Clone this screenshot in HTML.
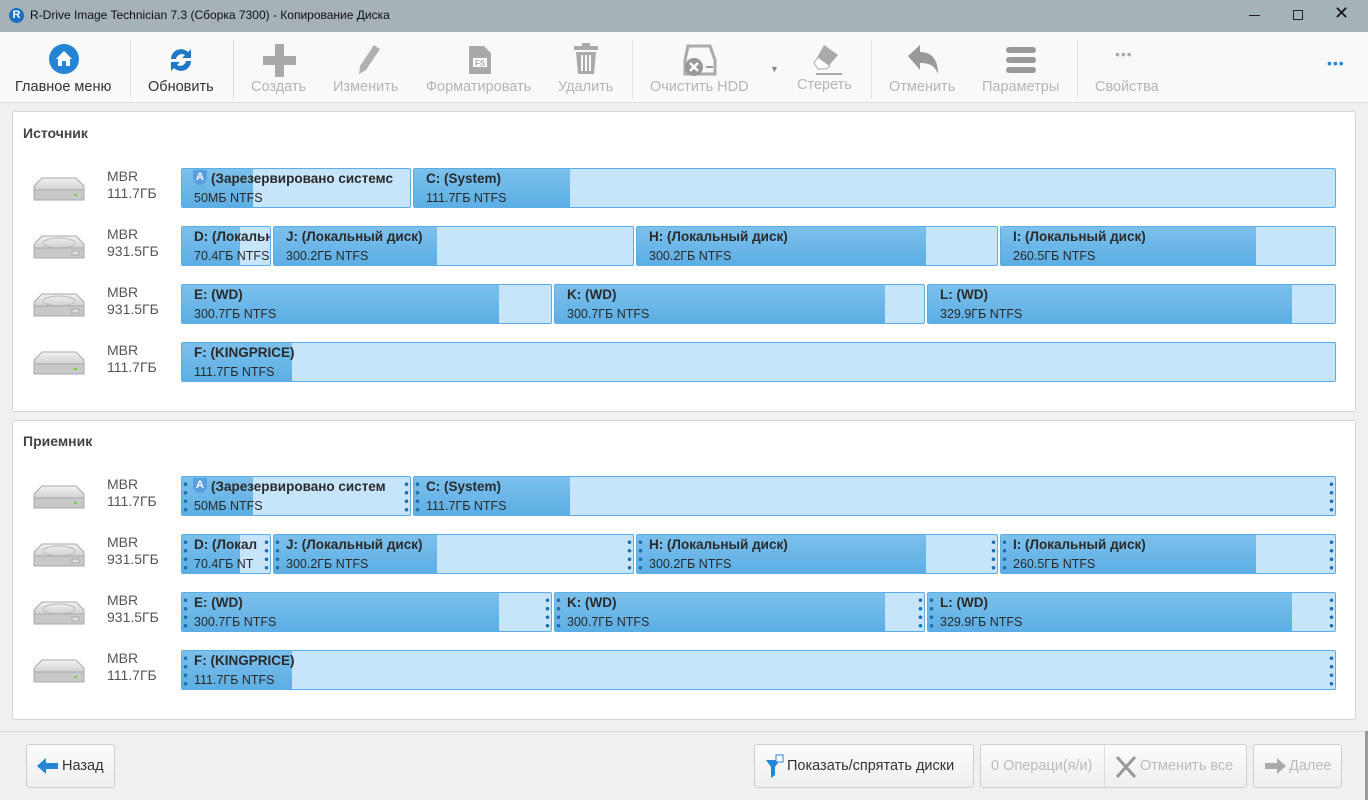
<!DOCTYPE html>
<html><head><meta charset="utf-8"><style>
*{margin:0;padding:0;box-sizing:border-box}
body{width:1368px;height:800px;overflow:hidden;background:#f0f0f0;font-family:"Liberation Sans",sans-serif;position:relative;color:#333}
.a{position:absolute}
#title{left:0;top:0;width:1368px;height:32px;background:#a5b2b8;font-size:12px;color:#111}
#tb{left:0;top:32px;width:1368px;height:71px;background:#f9f9f9;border-bottom:1px solid #ddd}
.tl{position:absolute;top:47px;font-size:14.5px;color:#b5b5b5;white-space:nowrap}
.tl.d{color:#333}
.sep{position:absolute;top:8px;width:1px;height:58px;background:#e0e0e0}
.panel{position:absolute;left:12px;width:1344px;background:#fff;border:1px solid #d4d4d4;border-radius:3px}
.ph{position:absolute;left:10px;font-size:14px;font-weight:bold;color:#444}
.mbr{position:absolute;left:107px;font-size:14px;color:#555;line-height:17px}
.hdd{position:absolute;left:32px;width:54px;height:30px}
.p{position:absolute;height:40px;background:#c7e5fa;border:1px solid #5aaee5;border-radius:2px;overflow:hidden;white-space:nowrap}
.u{position:absolute;left:0;top:0;bottom:0;background:linear-gradient(#7cc0ec,#5caee4)}
.p b{position:absolute;left:12px;top:2px;font-size:13.5px;color:#2a2a2a}
.p i{position:absolute;left:12px;top:22px;font-size:12.5px;font-style:normal;color:#2a2a2a}
.dt .p:before,.dt .p:after{content:"";position:absolute;top:3px;width:5px;height:34px;background:radial-gradient(circle,#1f6fae 1.6px,transparent 2px) 0 0/5px 8.5px repeat-y;z-index:2}
.dt .p:before{left:1px}.dt .p:after{right:1px}
.btn{position:absolute;top:744px;height:44px;border:1px solid #cfcfcf;border-radius:3px;background:linear-gradient(#fbfbfb,#efefef);font-size:14.5px;color:#333;line-height:42px}
</style></head><body>
<div id="title" class="a">
<div class="a" style="left:9px;top:8px;width:15px;height:15px;border-radius:50%;background:#1a6fc0;color:#fff;font-size:11px;font-weight:bold;text-align:center;line-height:15px">R</div>
<div class="a" style="left:30px;top:8px">R-Drive Image Technician 7.3 (Сборка 7300) - Копирование Диска</div>
<div class="a" style="left:1249px;top:15px;width:11px;height:1px;background:#222"></div>
<div class="a" style="left:1293px;top:10px;width:10px;height:10px;border:1px solid #222"></div>
<div class="a" style="left:1334px;top:3px;font-size:18px">✕</div>
</div>
<div id="tb" class="a">
<svg class="a" style="left:48px;top:11px" width="32" height="32"><circle cx="16" cy="16" r="15" fill="#2584d4"/><path d="M8 16 L16 8 L24 16 L22 16 L22 23 L18 23 L18 18 L14 18 L14 23 L10 23 L10 16Z" fill="#fff"/></svg>
<div class="tl d" style="left:15px">Главное меню</div>
<div class="sep" style="left:130px"></div>
<svg class="a" style="left:166px;top:12px" width="30" height="32"><path d="M5 15 A10 10 0 0 1 22 8 L25 5 L25 14 L16 14 L19 11 A6 6 0 0 0 10 15Z" fill="#1f77c6"/><path d="M25 17 A10 10 0 0 1 8 24 L5 27 L5 18 L14 18 L11 21 A6 6 0 0 0 20 17Z" fill="#1f77c6"/></svg>
<div class="tl d" style="left:148px">Обновить</div>
<div class="sep" style="left:233px"></div>
<svg class="a" style="left:263px;top:12px" width="33" height="33"><path d="M12 0h9v12h12v9H21v12h-9V21H0v-9h12z" fill="#a9a9a9"/></svg>
<div class="tl" style="left:251px">Создать</div>
<svg class="a" style="left:352px;top:10px" width="32" height="36"><path d="M22 3l6 4-14 21-7 4 1-8z" fill="#b0b0b0"/></svg>
<div class="tl" style="left:333px">Изменить</div>
<svg class="a" style="left:466px;top:12px" width="28" height="32"><path d="M3 2h15l7 7v21H3z" fill="#a9a9a9"/><rect x="7" y="14" width="14" height="9" fill="#fff"/><text x="9" y="22" font-size="8" font-family="Liberation Sans" font-weight="bold" fill="#a9a9a9">FS</text></svg>
<div class="tl" style="left:426px">Форматировать</div>
<svg class="a" style="left:572px;top:11px" width="28" height="34"><rect x="2" y="3" width="24" height="4" fill="#aaa"/><rect x="10" y="0" width="8" height="4" fill="#aaa"/><path d="M4 9h20l-2 22H6z" fill="#aaa"/><path d="M10 12v16M14 12v16M18 12v16" stroke="#f9f9f9" stroke-width="2"/></svg>
<div class="tl" style="left:558px">Удалить</div>
<div class="sep" style="left:632px"></div>
<svg class="a" style="left:682px;top:12px" width="36" height="34"><path d="M6 2h22l5 14v14H3V16z" fill="none" stroke="#aaa" stroke-width="3"/><circle cx="12" cy="23" r="9" fill="#999"/><path d="M8 19l8 8M16 19l-8 8" stroke="#fff" stroke-width="2.5"/><rect x="24" y="22" width="7" height="2" fill="#999"/></svg>
<div class="tl" style="left:650px">Очистить HDD</div>
<div class="a" style="left:770px;top:32px;font-size:9px;color:#888">▼</div>
<svg class="a" style="left:808px;top:11px" width="36" height="34"><path d="M16 2l14 10-12 14h-8l-4-6z" fill="#aaa"/><path d="M10 14l12 9-4 3h-8l-4-6z" fill="#fff" stroke="#aaa"/><rect x="8" y="30" width="26" height="2" fill="#aaa"/></svg>
<div class="tl" style="left:797px;top:45px">Стереть</div>
<div class="sep" style="left:871px"></div>
<svg class="a" style="left:906px;top:12px" width="34" height="34"><path d="M2 12L14 1v7c12 0 18 8 18 22c-3-8-8-11-18-11v7z" fill="#999"/></svg>
<div class="tl" style="left:889px">Отменить</div>
<svg class="a" style="left:1005px;top:14px" width="32" height="28"><rect x="1" y="1" width="30" height="6" rx="3" fill="#999"/><rect x="1" y="11" width="30" height="6" rx="3" fill="#999"/><rect x="1" y="21" width="30" height="6" rx="3" fill="#999"/></svg>
<div class="tl" style="left:982px">Параметры</div>
<div class="sep" style="left:1077px"></div>
<div class="a" style="left:1115px;top:14px;color:#aaa;font-size:14px;letter-spacing:1px">•••</div>
<div class="tl" style="left:1095px">Свойства</div>
<div class="a" style="left:1327px;top:23px;color:#2584d4;font-size:14px;letter-spacing:1px">•••</div>
</div>

<div class="panel" style="top:111px;height:301px"><div class="ph" style="top:13px">Источник</div></div>
<div class="panel" style="top:420px;height:300px"><div class="ph" style="top:12px">Приемник</div></div>

<svg width="0" height="0" style="position:absolute"><defs>
<linearGradient id="g1" x1="0" y1="0" x2="0" y2="1"><stop offset="0" stop-color="#f2f2f2"/><stop offset="1" stop-color="#b9b9b9"/></linearGradient></defs></svg>
<div class="a" style="left:0;top:0">
<svg class="hdd" style="top:174px" viewBox="0 0 54 30"><path d="M2 12L10 4h34l8 8v12H2z" fill="url(#g1)" stroke="#aaa"/><rect x="2" y="16" width="50" height="10" fill="#c8c8c8" stroke="#aaa"/><rect x="42" y="20" width="3" height="2" fill="#7c3"/></svg>
<svg class="hdd" style="top:232px" viewBox="0 0 54 30"><path d="M2 12L10 4h34l8 8v12H2z" fill="url(#g1)" stroke="#aaa"/><ellipse cx="27" cy="11" rx="16" ry="5" fill="none" stroke="#bbb"/><rect x="2" y="16" width="50" height="10" fill="#c8c8c8" stroke="#aaa"/><rect x="40" y="19" width="7" height="4" fill="#ddd" stroke="#aaa"/></svg>
<svg class="hdd" style="top:290px" viewBox="0 0 54 30"><path d="M2 12L10 4h34l8 8v12H2z" fill="url(#g1)" stroke="#aaa"/><ellipse cx="27" cy="11" rx="16" ry="5" fill="none" stroke="#bbb"/><rect x="2" y="16" width="50" height="10" fill="#c8c8c8" stroke="#aaa"/><rect x="40" y="19" width="7" height="4" fill="#ddd" stroke="#aaa"/></svg>
<svg class="hdd" style="top:348px" viewBox="0 0 54 30"><path d="M2 12L10 4h34l8 8v12H2z" fill="url(#g1)" stroke="#aaa"/><rect x="2" y="16" width="50" height="10" fill="#c8c8c8" stroke="#aaa"/><rect x="42" y="20" width="3" height="2" fill="#7c3"/></svg>
<svg class="hdd" style="top:482px" viewBox="0 0 54 30"><path d="M2 12L10 4h34l8 8v12H2z" fill="url(#g1)" stroke="#aaa"/><rect x="2" y="16" width="50" height="10" fill="#c8c8c8" stroke="#aaa"/><rect x="42" y="20" width="3" height="2" fill="#7c3"/></svg>
<svg class="hdd" style="top:540px" viewBox="0 0 54 30"><path d="M2 12L10 4h34l8 8v12H2z" fill="url(#g1)" stroke="#aaa"/><ellipse cx="27" cy="11" rx="16" ry="5" fill="none" stroke="#bbb"/><rect x="2" y="16" width="50" height="10" fill="#c8c8c8" stroke="#aaa"/><rect x="40" y="19" width="7" height="4" fill="#ddd" stroke="#aaa"/></svg>
<svg class="hdd" style="top:598px" viewBox="0 0 54 30"><path d="M2 12L10 4h34l8 8v12H2z" fill="url(#g1)" stroke="#aaa"/><ellipse cx="27" cy="11" rx="16" ry="5" fill="none" stroke="#bbb"/><rect x="2" y="16" width="50" height="10" fill="#c8c8c8" stroke="#aaa"/><rect x="40" y="19" width="7" height="4" fill="#ddd" stroke="#aaa"/></svg>
<svg class="hdd" style="top:656px" viewBox="0 0 54 30"><path d="M2 12L10 4h34l8 8v12H2z" fill="url(#g1)" stroke="#aaa"/><rect x="2" y="16" width="50" height="10" fill="#c8c8c8" stroke="#aaa"/><rect x="42" y="20" width="3" height="2" fill="#7c3"/></svg>
<div class="mbr" style="top:168px">MBR<br>111.7ГБ</div>
<div class="mbr" style="top:226px">MBR<br>931.5ГБ</div>
<div class="mbr" style="top:284px">MBR<br>931.5ГБ</div>
<div class="mbr" style="top:342px">MBR<br>111.7ГБ</div>
<div class="mbr" style="top:476px">MBR<br>111.7ГБ</div>
<div class="mbr" style="top:534px">MBR<br>931.5ГБ</div>
<div class="mbr" style="top:592px">MBR<br>931.5ГБ</div>
<div class="mbr" style="top:650px">MBR<br>111.7ГБ</div>
</div>

<div class="a" style="left:0;top:168px">
<div class="p" style="left:181px;top:0;width:230px"><div class="u" style="width:71px"></div><span class="a" style="left:11px;top:1px;width:14px;height:15px;background:#5aa0e0;border-radius:0 0 7px 7px;color:#fff;font-size:11px;font-weight:bold;text-align:center;line-height:14px">A</span><b style="left:29px">(Зарезервировано системс</b><i>50МБ NTFS</i></div>
<div class="p" style="left:413px;top:0;width:923px"><div class="u" style="width:156px"></div><b>C: (System)</b><i>111.7ГБ NTFS</i></div>
<div class="p" style="left:181px;top:58px;width:90px"><div class="u" style="width:58px"></div><b>D: (Локальный</b><i>70.4ГБ NTFS</i></div>
<div class="p" style="left:273px;top:58px;width:361px"><div class="u" style="width:163px"></div><b>J: (Локальный диск)</b><i>300.2ГБ NTFS</i></div>
<div class="p" style="left:636px;top:58px;width:362px"><div class="u" style="width:289px"></div><b>H: (Локальный диск)</b><i>300.2ГБ NTFS</i></div>
<div class="p" style="left:1000px;top:58px;width:336px"><div class="u" style="width:255px"></div><b>I: (Локальный диск)</b><i>260.5ГБ NTFS</i></div>
<div class="p" style="left:181px;top:116px;width:371px"><div class="u" style="width:317px"></div><b>E: (WD)</b><i>300.7ГБ NTFS</i></div>
<div class="p" style="left:554px;top:116px;width:371px"><div class="u" style="width:330px"></div><b>K: (WD)</b><i>300.7ГБ NTFS</i></div>
<div class="p" style="left:927px;top:116px;width:409px"><div class="u" style="width:364px"></div><b>L: (WD)</b><i>329.9ГБ NTFS</i></div>
<div class="p" style="left:181px;top:174px;width:1155px"><div class="u" style="width:110px"></div><b>F: (KINGPRICE)</b><i>111.7ГБ NTFS</i></div>
</div>
<div class="a dt" style="left:0;top:476px">
<div class="p" style="left:181px;top:0;width:230px"><div class="u" style="width:71px"></div><span class="a" style="left:11px;top:1px;width:14px;height:15px;background:#5aa0e0;border-radius:0 0 7px 7px;color:#fff;font-size:11px;font-weight:bold;text-align:center;line-height:14px">A</span><b style="left:29px">(Зарезервировано систем</b><i>50МБ NTFS</i></div>
<div class="p" style="left:413px;top:0;width:923px"><div class="u" style="width:156px"></div><b>C: (System)</b><i>111.7ГБ NTFS</i></div>
<div class="p" style="left:181px;top:58px;width:90px"><div class="u" style="width:58px"></div><b>D: (Локал</b><i>70.4ГБ NT</i></div>
<div class="p" style="left:273px;top:58px;width:361px"><div class="u" style="width:163px"></div><b>J: (Локальный диск)</b><i>300.2ГБ NTFS</i></div>
<div class="p" style="left:636px;top:58px;width:362px"><div class="u" style="width:289px"></div><b>H: (Локальный диск)</b><i>300.2ГБ NTFS</i></div>
<div class="p" style="left:1000px;top:58px;width:336px"><div class="u" style="width:255px"></div><b>I: (Локальный диск)</b><i>260.5ГБ NTFS</i></div>
<div class="p" style="left:181px;top:116px;width:371px"><div class="u" style="width:317px"></div><b>E: (WD)</b><i>300.7ГБ NTFS</i></div>
<div class="p" style="left:554px;top:116px;width:371px"><div class="u" style="width:330px"></div><b>K: (WD)</b><i>300.7ГБ NTFS</i></div>
<div class="p" style="left:927px;top:116px;width:409px"><div class="u" style="width:364px"></div><b>L: (WD)</b><i>329.9ГБ NTFS</i></div>
<div class="p" style="left:181px;top:174px;width:1155px"><div class="u" style="width:110px"></div><b>F: (KINGPRICE)</b><i>111.7ГБ NTFS</i></div>
</div>

<div class="a" style="left:0;top:731px;width:1368px;height:69px;background:#f0f0f0;border-top:1px solid #d8d8d8"></div>
<div class="a" style="left:1365px;top:731px;width:3px;height:69px;background:#999"></div>
<div class="btn" style="left:26px;width:89px"><svg class="a" style="left:10px;top:13px" width="22" height="16"><path d="M0 8L9 0v5h12v6H9v5z" fill="#2584d4"/></svg><span class="a" style="left:35px">Назад</span></div>
<div class="btn" style="left:754px;width:220px"><svg class="a" style="left:10px;top:9px" width="20" height="24"><path d="M1 6h14l-5 7v8l-4 3V13z" fill="#2584d4"/><rect x="11" y="1" width="7" height="7" fill="#fff" stroke="#2584d4"/></svg><span class="a" style="left:32px">Показать/спрятать диски</span></div>
<div class="btn" style="left:980px;width:267px;color:#bbb"><span class="a" style="left:10px">0 Операци(я/и)</span><div class="a" style="left:123px;top:0;width:1px;height:42px;background:#ddd"></div><svg class="a" style="left:133px;top:10px" width="24" height="24"><path d="M3 2L21 22M21 2L3 22" stroke="#999" stroke-width="3"/></svg><span class="a" style="left:159px">Отменить все</span></div>
<div class="btn" style="left:1253px;width:89px;color:#bbb"><svg class="a" style="left:10px;top:13px" width="22" height="16"><path d="M22 8L13 0v5H1v6h12v5z" fill="#aaa"/></svg><span class="a" style="left:35px">Далее</span></div>
</body></html>
